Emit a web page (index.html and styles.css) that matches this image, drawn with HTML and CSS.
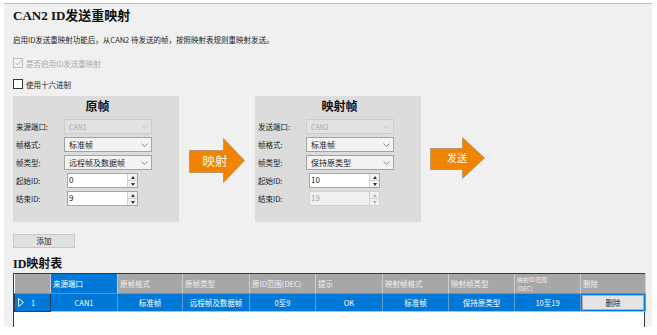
FILE: index.html
```html
<!DOCTYPE html>
<html lang="zh-CN">
<head>
  <meta charset="UTF-8" />
  <title>CAN2 ID发送重映射</title>
  <link rel="stylesheet" href="styles.css">
</head>
<body>
  <div class="panel">
    <h1 class="title">CAN2 ID发送重映射</h1>
    <p class="desc">启用ID发送重映射功能后，从CAN2 待发送的帧，按照映射表规则重映射发送。</p>

    <label class="check disabled">
      <span class="box"><svg width="7" height="6" viewBox="0 0 7 6"><polyline points="0.5,3 2.5,5 6.5,0.5" fill="none" stroke="#b5b5b5" stroke-width="1"/></svg></span>
      是否启用ID发送重映射
    </label>
    <label class="check">
      <span class="box"></span>
      使用十六进制
    </label>

    <div class="frames">
      <div class="group">
        <div class="group-title">原帧</div>
        <div class="row">
          <span class="lbl">来源端口:</span>
          <div class="combo disabled"><span>CAN1</span><svg class="chev" width="7" height="4" viewBox="0 0 7 4"><polyline points="0.5,0.5 3.5,3.5 6.5,0.5" fill="none" stroke="#c4c4c4"/></svg></div>
        </div>
        <div class="row">
          <span class="lbl">帧格式:</span>
          <div class="combo"><span>标准帧</span><svg class="chev" width="7" height="4" viewBox="0 0 7 4"><polyline points="0.5,0.5 3.5,3.5 6.5,0.5" fill="none" stroke="#8a8a8a"/></svg></div>
        </div>
        <div class="row">
          <span class="lbl">帧类型:</span>
          <div class="combo"><span>远程帧及数据帧</span><svg class="chev" width="7" height="4" viewBox="0 0 7 4"><polyline points="0.5,0.5 3.5,3.5 6.5,0.5" fill="none" stroke="#8a8a8a"/></svg></div>
        </div>
        <div class="row">
          <span class="lbl">起始ID:</span>
          <div class="spin"><span class="val">0</span><span class="spin-btns"><i class="up"></i><i class="down"></i></span></div>
        </div>
        <div class="row">
          <span class="lbl">结束ID:</span>
          <div class="spin"><span class="val">9</span><span class="spin-btns"><i class="up"></i><i class="down"></i></span></div>
        </div>
      </div>

      <svg class="arrow map-arrow" width="57" height="46" viewBox="0 0 57 46">
        <polygon points="0.5,12.5 34.5,12.5 34.5,0.5 55.5,22.5 34.5,44.5 34.5,34.5 0.5,34.5" fill="#f08300" stroke="#a08060" stroke-width="0.6"/>
        <text x="26" y="28" text-anchor="middle" class="arrow-text big">映射</text>
      </svg>

      <div class="group">
        <div class="group-title">映射帧</div>
        <div class="row">
          <span class="lbl">发送端口:</span>
          <div class="combo disabled"><span>CAN2</span><svg class="chev" width="7" height="4" viewBox="0 0 7 4"><polyline points="0.5,0.5 3.5,3.5 6.5,0.5" fill="none" stroke="#c4c4c4"/></svg></div>
        </div>
        <div class="row">
          <span class="lbl">帧格式:</span>
          <div class="combo"><span>标准帧</span><svg class="chev" width="7" height="4" viewBox="0 0 7 4"><polyline points="0.5,0.5 3.5,3.5 6.5,0.5" fill="none" stroke="#8a8a8a"/></svg></div>
        </div>
        <div class="row">
          <span class="lbl">帧类型:</span>
          <div class="combo"><span>保持原类型</span><svg class="chev" width="7" height="4" viewBox="0 0 7 4"><polyline points="0.5,0.5 3.5,3.5 6.5,0.5" fill="none" stroke="#8a8a8a"/></svg></div>
        </div>
        <div class="row">
          <span class="lbl">起始ID:</span>
          <div class="spin"><span class="val">10</span><span class="spin-btns"><i class="up"></i><i class="down"></i></span></div>
        </div>
        <div class="row">
          <span class="lbl">结束ID:</span>
          <div class="spin disabled"><span class="val">19</span><span class="spin-btns"><i class="up"></i><i class="down"></i></span></div>
        </div>
      </div>

      <svg class="arrow send-arrow" width="56" height="43" viewBox="0 0 56 43">
        <polygon points="0.5,11.5 32.5,11.5 32.5,0.5 54.5,21 32.5,41.5 32.5,32.5 0.5,32.5" fill="#f08300" stroke="#a08060" stroke-width="0.6"/>
        <text x="27" y="25" text-anchor="middle" class="arrow-text">发送</text>
      </svg>
    </div>

    <button class="add">添加</button>

    <h2 class="table-title">ID映射表</h2>
    <div class="grid">
      <table>
        <colgroup>
          <col style="width:36px"><col style="width:67px"><col style="width:65px"><col style="width:67px"><col style="width:66px"><col style="width:67px"><col style="width:66px"><col style="width:66px"><col style="width:66px"><col style="width:65px">
        </colgroup>
        <thead>
          <tr>
            <th class="corner"></th>
            <th class="sel">来源端口</th>
            <th>原帧格式</th>
            <th>原帧类型</th>
            <th>原ID范围(DEC)</th>
            <th>提示</th>
            <th>映射帧格式</th>
            <th>映射帧类型</th>
            <th class="two"><span>映射ID范围</span><span>(DEC)</span></th>
            <th>删除</th>
          </tr>
        </thead>
        <tbody>
          <tr>
            <td class="rowhead"><svg class="tri" width="6" height="9" viewBox="0 0 6 9"><polygon points="0.5,0.5 5.5,4.5 0.5,8.5" fill="none" stroke="#ffffff" stroke-width="1"/></svg>1</td>
            <td>CAN1</td>
            <td>标准帧</td>
            <td>远程帧及数据帧</td>
            <td>0至9</td>
            <td>OK</td>
            <td>标准帧</td>
            <td>保持原类型</td>
            <td>10至19</td>
            <td class="btn-cell"><span class="del">删除</span></td>
          </tr>
        </tbody>
      </table>
    </div>
  </div>
</body>
</html>
```

FILE: styles.css
```css
body {
  margin: 0;
  background: #ffffff;
  font-family: "Noto Sans CJK SC", sans-serif;
  font-size: 7.5px;
  color: #1a1a1a;
}
.panel {
  margin: 3px 0 0 4px;
  width: 648px;
  height: 324px;
  box-sizing: border-box;
  padding: 3px 0 0 9px;
  background: #f0f0f0;
  border-top: 1px solid #bdbdbd;
}
.title {
  margin: 0;
  font-family: "Liberation Serif", "Noto Sans CJK SC", serif;
  font-size: 13px;
  line-height: 18px;
  font-weight: bold;
  color: #111;
}
.desc {
  margin: 9px 0 0;
  line-height: 12px;
}
.check {
  display: flex;
  align-items: center;
  gap: 3px;
  height: 14px;
  margin-top: 10px;
}
.check + .check {
  margin-top: 7px;
}
.check .box {
  width: 8px;
  height: 8px;
  border: 1px solid #333;
  background: #fff;
  display: flex;
  align-items: center;
  justify-content: center;
}
.check.disabled {
  color: #a8a8a8;
}
.check.disabled .box {
  border-color: #bcbcbc;
  background: #f4f4f4;
}
.frames {
  display: flex;
  align-items: flex-start;
  margin-top: 5px;
}
.group {
  width: 166px;
  height: 126px;
  box-sizing: border-box;
  padding: 3px 0 0 3px;
  background: #dcdcdc;
}
.group-title {
  text-align: center;
  font-family: "Liberation Serif", "Noto Sans CJK SC", serif;
  font-size: 12px;
  font-weight: bold;
  line-height: 17px;
  height: 20px;
  color: #111;
}
.row {
  display: flex;
  align-items: center;
  height: 15px;
  margin-bottom: 3px;
}
.lbl {
  width: 48px;
  flex: none;
}
.combo {
  width: 88px;
  height: 15px;
  box-sizing: border-box;
  border: 1px solid #a3a3a3;
  background: #f3f3f3;
  display: flex;
  align-items: center;
  justify-content: space-between;
  padding: 0 3px 0 4px;
  font-size: 8px;
}
.combo.disabled {
  background: #e2e2e2;
  border-color: #cccccc;
  color: #a9a9a9;
  font-size: 7px;
}
.spin {
  width: 71px;
  height: 15px;
  margin-left: 3px;
  box-sizing: border-box;
  border: 1px solid #a6a6a6;
  background: #fff;
  display: flex;
  justify-content: space-between;
  font-size: 8px;
}
.spin .val {
  padding-left: 1px;
  line-height: 12px;
}
.spin-btns {
  width: 9px;
  display: flex;
  flex-direction: column;
  border-left: 1px solid #d0d0d0;
}
.spin-btns i {
  flex: 1;
  display: flex;
  align-items: center;
  justify-content: center;
  background: #f2f2f2;
}
.spin-btns i + i {
  border-top: 1px solid #d0d0d0;
}
.spin-btns .up::after {
  content: "";
  border-left: 2px solid transparent;
  border-right: 2px solid transparent;
  border-bottom: 3px solid #333;
}
.spin-btns .down::after {
  content: "";
  border-left: 2px solid transparent;
  border-right: 2px solid transparent;
  border-top: 3px solid #333;
}
.spin.disabled {
  background: #f0f0f0;
  border-color: #cfcfcf;
  color: #a9a9a9;
}
.spin.disabled .spin-btns i::after {
  border-top-color: #b0b0b0;
  border-bottom-color: #b0b0b0;
}
.arrow {
  flex: none;
}
.map-arrow {
  margin: 42px 9px 0 10px;
}
.send-arrow {
  margin: 41px 0 0 9px;
}
.arrow-text {
  fill: #ffffff;
  font-family: "Noto Sans CJK SC", sans-serif;
  font-size: 10px;
}
.arrow-text.big {
  font-size: 12.5px;
}
.add {
  display: block;
  margin-top: 12px;
  width: 62px;
  height: 14px;
  padding: 0;
  border: 1px solid #c8c8c8;
  background: #e1e1e1;
  font-family: "Noto Sans CJK SC", sans-serif;
  font-size: 7.5px;
  line-height: 12px;
  color: #222;
}
.table-title {
  margin: 8px 0 0;
  font-family: "Liberation Serif", "Noto Sans CJK SC", serif;
  font-size: 12px;
  line-height: 16px;
  font-weight: bold;
  color: #111;
}
.grid {
  margin-top: 1px;
  width: 632px;
  height: 54px;
  box-sizing: border-box;
  background: #ffffff;
  border-top: 1px solid #3a3a3a;
  border-left: 1px solid #3a3a3a;
  border-right: 1px solid #3a3a3a;
}
table {
  table-layout: fixed;
  border-collapse: collapse;
  width: 630px;
}
th {
  height: 19px;
  padding: 0 0 0 2px;
  text-align: left;
  font-weight: normal;
  font-size: 7.5px;
  color: #f0f0f0;
  background: #a7a7a7;
  border-right: 1px solid #cdcdcd;
  border-bottom: 1px solid #8c8c8c;
  white-space: nowrap;
}
th.sel {
  background: #0078d7;
  color: #ffffff;
}
th.two span {
  display: block;
  font-size: 6px;
  line-height: 9px;
}
td {
  height: 15px;
  padding: 0;
  text-align: center;
  color: #ffffff;
  background: #0078d7;
  border-right: 1px solid #5b9ede;
  border-bottom: 1px solid #bdbdbd;
}
td.rowhead {
  text-align: left;
  padding-left: 3px;
  border: 1px solid #263f5a;
}
.tri {
  margin-right: 7px;
  vertical-align: -1px;
}
td.btn-cell {
  padding: 1px;
}
.del {
  display: block;
  height: 13px;
  line-height: 13px;
  background: #e3e3e3;
  border: 1px solid #b0b0b0;
  color: #222;
}
```
